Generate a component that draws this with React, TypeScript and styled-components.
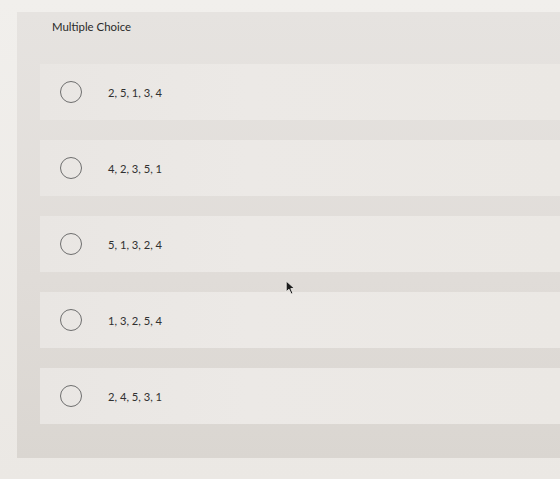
import styled, { createGlobalStyle } from 'styled-components'

const GlobalStyle = createGlobalStyle`
  html, body {
    margin: 0;
    padding: 0;
    background: #eeece9;
    font-family: 'Lato', 'Open Sans', sans-serif;
    overflow: hidden;
  }
`

const choices = ['2, 5, 1, 3, 4', '4, 2, 3, 5, 1', '5, 1, 3, 2, 4', '1, 3, 2, 5, 4', '2, 4, 5, 3, 1']

const Cursor = () => (
  <CursorWrap>
    <svg width='11' height='15' viewBox='0 0 10 14'>
      <path d='M1 1 L1 11 L3.6 8.6 L5.6 13 L7.2 12.3 L5.3 8 L8.8 8 Z' fill='#1c1c1c' stroke='#f2f0ec' strokeWidth='0.8' />
    </svg>
  </CursorWrap>
)

const App = () => {
  return (
    <Page>
      <GlobalStyle />
      <Card>
        <Title>Multiple Choice</Title>
        <OptionList>
          {choices.map((c) => (
            <Option key={c}>
              <Radio />
              <OptionLabel>{c}</OptionLabel>
            </Option>
          ))}
        </OptionList>
      </Card>
      <Cursor />
    </Page>
  )
}

export default App

const Page = styled.div`
  position: relative;
  width: 560px;
  height: 479px;
  padding-top: 12px;
  box-sizing: border-box;
  background: linear-gradient(180deg, #f1efec 0%, #ebe8e4 100%);
`
const Card = styled.div`
  margin-left: 17px;
  height: 446px;
  box-sizing: border-box;
  padding-bottom: 40px;
  background: linear-gradient(180deg, #e6e3e0 0%, #e0dcd8 60%, #dad6d1 100%);
`
const Title = styled.div`
  height: 52px;
  box-sizing: border-box;
  padding: 8px 0 0 35px;
  font-size: 11.4px;
  line-height: 14px;
  color: #2a2a2a;
`
const OptionList = styled.div`
  display: flex;
  flex-direction: column;
  gap: 20px;
  margin-left: 23px;
`
const Option = styled.div`
  height: 56px;
  display: flex;
  align-items: center;
  padding-left: 20px;
  background: linear-gradient(90deg, #e9e6e3 0%, #ece9e6 40%, #ebe8e4 100%);
`
const Radio = styled.span`
  width: 20px;
  height: 20px;
  border-radius: 50%;
  border: 1.5px solid #6e6e6e;
  flex-shrink: 0;
`
const OptionLabel = styled.span`
  margin-left: 26px;
  font-size: 11.2px;
  color: #303030;
`
const CursorWrap = styled.div`
  position: absolute;
  left: 285px;
  top: 280px;
  line-height: 0;
`
